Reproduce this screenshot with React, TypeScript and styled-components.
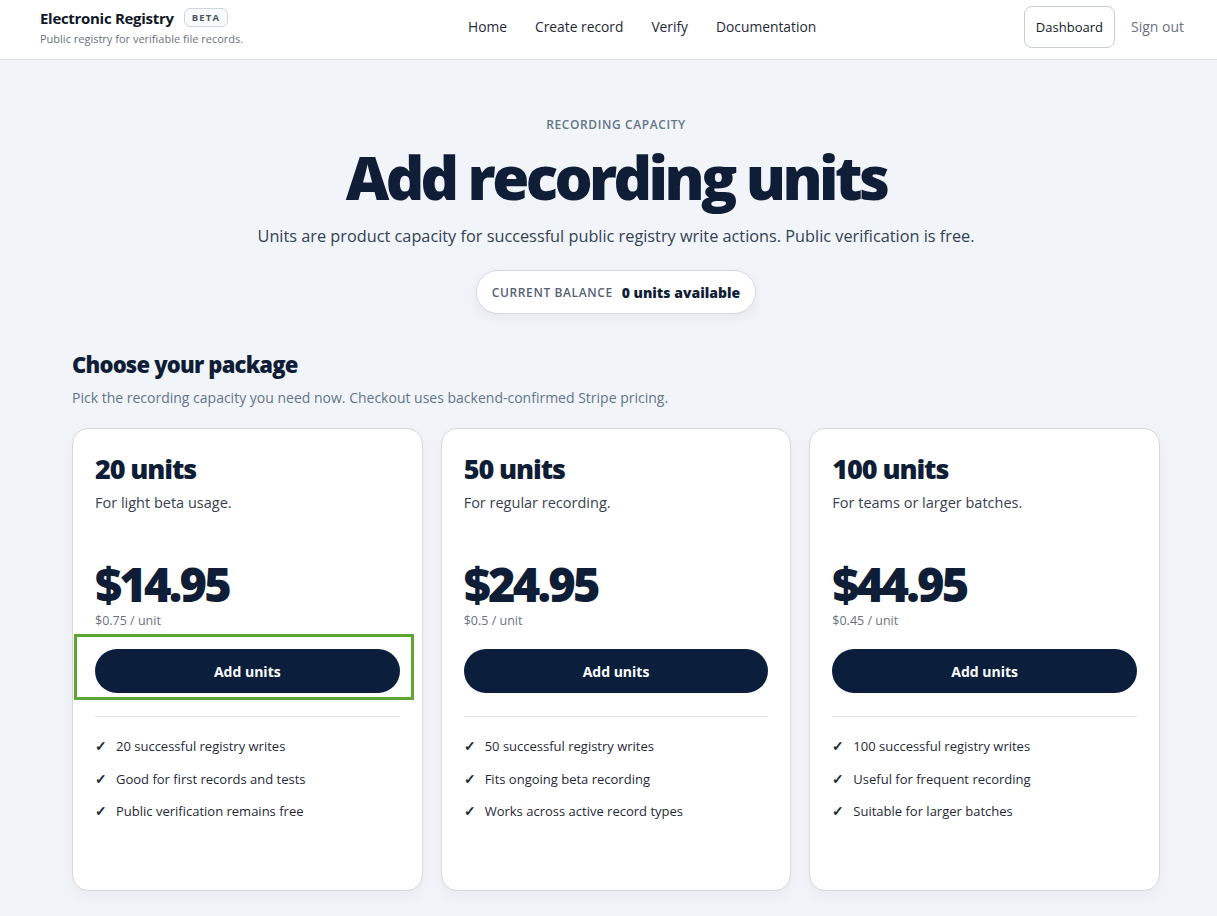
import React from "react";
import styled, { createGlobalStyle } from "styled-components";

const GlobalStyle = createGlobalStyle`
  * { box-sizing: border-box; }
  body {
    margin: 0;
    background: #f1f4f8;
    font-family: "Open Sans", "Noto Sans", "Liberation Sans", sans-serif;
    color: #0f1e36;
  }
`;

const Header = styled.header`
  height: 60px;
  background: #ffffff;
  border-bottom: 1px solid #d9dde3;
  display: grid;
  grid-template-columns: 428px auto 1fr;
  align-items: center;
  padding: 0 33px 6px 40px;
`;

const Brand = styled.div`
  display: flex;
  flex-direction: column;
  gap: 3px;
`;

const BrandRow = styled.div`
  display: flex;
  align-items: center;
  gap: 10px;
`;

const BrandName = styled.span`
  font-size: 15px;
  font-weight: 700;
  color: #111827;
  letter-spacing: -0.3px;
`;

const Badge = styled.span`
  font-size: 9.5px;
  font-weight: 700;
  letter-spacing: 1.2px;
  color: #4b5563;
  border: 1px solid #d1d5db;
  border-radius: 6px;
  padding: 2px 7px;
  background: #f9fafb;
`;

const Tagline = styled.span`
  font-size: 11px;
  color: #6b7280;
`;

const Nav = styled.nav`
  display: flex;
  gap: 28px;
`;

const NavLink = styled.a`
  font-size: 13.8px;
  font-weight: 500;
  color: #1f2937;
  text-decoration: none;
`;

const Actions = styled.div`
  display: flex;
  justify-content: flex-end;
  align-items: center;
  gap: 16px;
`;

const DashButton = styled.button`
  height: 42px;
  padding: 0 11px;
  background: #fff;
  border: 1px solid #c6ccd4;
  border-radius: 8px;
  font: inherit;
  font-size: 13px;
  font-weight: 500;
  color: #111827;
`;

const SignOut = styled.a`
  font-size: 14px;
  color: #6b7280;
`;

const Main = styled.main`
  width: 1088px;
  margin: 0 0 0 72px;
  padding: 56px 0 24px;
`;

const Hero = styled.section`
  display: flex;
  flex-direction: column;
  align-items: center;
  text-align: center;
`;

const Eyebrow = styled.div`
  font-size: 12px;
  font-weight: 600;
  letter-spacing: 0.6px;
  color: #64748b;
`;

const Title = styled.h1`
  margin: 6px 0 0;
  font-size: 60px;
  line-height: 76px;
  font-weight: 800;
  letter-spacing: -3.6px;
  color: #0f1e36;
`;

const Lead = styled.p`
  margin: 10px 0 0;
  font-size: 16.3px;
  color: #334155;
`;

const Balance = styled.div`
  margin-top: 23px;
  height: 44px;
  display: flex;
  align-items: center;
  gap: 9px;
  padding: 0 15px;
  background: #fff;
  border: 1px solid #d6dbe2;
  border-radius: 999px;
  box-shadow: 0 4px 14px rgba(15, 30, 54, 0.06);
`;

const BalanceLabel = styled.span`
  font-size: 12px;
  font-weight: 600;
  letter-spacing: 0.6px;
  color: #556274;
`;

const BalanceValue = styled.span`
  font-size: 14px;
  font-weight: 800;
  color: #0f1e36;
`;

const SectionTitle = styled.h2`
  margin: 35px 0 0;
  font-size: 22px;
  font-weight: 800;
  letter-spacing: -0.8px;
  color: #0f1e36;
`;

const SectionLead = styled.p`
  margin: 9px 0 0;
  font-size: 14px;
  color: #64748b;
`;

const Grid = styled.div`
  margin-top: 21px;
  display: grid;
  grid-template-columns: repeat(3, 1fr);
  gap: 18px;
`;

const Card = styled.div`
  position: relative;
  height: 463px;
  background: #fff;
  border: 1px solid #d3d8df;
  border-radius: 16px;
  padding: 22px 22px;
  display: flex;
  flex-direction: column;
  box-shadow: 0 6px 18px rgba(15, 30, 54, 0.04);
`;

const CardTitle = styled.h3`
  margin: 0;
  font-size: 27px;
  line-height: 36px;
  font-weight: 800;
  letter-spacing: -1.1px;
  color: #0f1e36;
`;

const CardDesc = styled.p`
  margin: 6px 0 0;
  font-size: 14.5px;
  color: #374151;
  min-height: 55px;
`;

const Price = styled.div`
  margin-top: 11px;
  font-size: 47px;
  line-height: 50px;
  font-weight: 800;
  letter-spacing: -2.8px;
  color: #0f1e36;
`;

const PerUnit = styled.div`
  margin-top: 3px;
  font-size: 12.5px;
  color: #6b7280;
`;

const AddButton = styled.button`
  margin-top: 20px;
  height: 44px;
  border: none;
  border-radius: 999px;
  background: #0b1f3d;
  color: #fff;
  font: inherit;
  font-size: 14px;
  font-weight: 700;
`;

const Highlight = styled.div`
  position: absolute;
  left: 1px;
  top: 205px;
  width: 340px;
  height: 66px;
  border: 3px solid #5ea531;
  pointer-events: none;
`;

const Divider = styled.hr`
  margin: 23px 0 0;
  border: none;
  border-top: 1px solid #dfe3e8;
`;

const Features = styled.ul`
  list-style: none;
  margin: 19px 0 0;
  padding: 0;
  display: flex;
  flex-direction: column;
  gap: 12.5px;
`;

const Feature = styled.li`
  display: flex;
  gap: 11px;
  font-size: 13px;
  line-height: 20px;
  color: #1f2937;
`;

const Check = styled.span`
  width: 10px;
  font-size: 14px;
  font-weight: 700;
  color: #1f2937;
`;

const packages = [
  {
    units: 20,
    desc: "For light beta usage.",
    price: "$14.95",
    per: "$0.75 / unit",
    features: ["20 successful registry writes", "Good for first records and tests", "Public verification remains free"],
  },
  {
    units: 50,
    desc: "For regular recording.",
    price: "$24.95",
    per: "$0.5 / unit",
    features: ["50 successful registry writes", "Fits ongoing beta recording", "Works across active record types"],
  },
  {
    units: 100,
    desc: "For teams or larger batches.",
    price: "$44.95",
    per: "$0.45 / unit",
    features: ["100 successful registry writes", "Useful for frequent recording", "Suitable for larger batches"],
  },
];

export default function App() {
  return (
    <>
      <GlobalStyle />
      <Header>
        <Brand>
          <BrandRow>
            <BrandName>Electronic Registry</BrandName>
            <Badge>BETA</Badge>
          </BrandRow>
          <Tagline>Public registry for verifiable file records.</Tagline>
        </Brand>
        <Nav>
          <NavLink href="#">Home</NavLink>
          <NavLink href="#">Create record</NavLink>
          <NavLink href="#">Verify</NavLink>
          <NavLink href="#">Documentation</NavLink>
        </Nav>
        <Actions>
          <DashButton>Dashboard</DashButton>
          <SignOut>Sign out</SignOut>
        </Actions>
      </Header>
      <Main>
        <Hero>
          <Eyebrow>RECORDING CAPACITY</Eyebrow>
          <Title>Add recording units</Title>
          <Lead>Units are product capacity for successful public registry write actions. Public verification is free.</Lead>
          <Balance>
            <BalanceLabel>CURRENT BALANCE</BalanceLabel>
            <BalanceValue>0 units available</BalanceValue>
          </Balance>
        </Hero>
        <SectionTitle>Choose your package</SectionTitle>
        <SectionLead>Pick the recording capacity you need now. Checkout uses backend-confirmed Stripe pricing.</SectionLead>
        <Grid>
          {packages.map((p, i) => (
            <Card key={p.units}>
              <CardTitle>{p.units} units</CardTitle>
              <CardDesc>{p.desc}</CardDesc>
              <Price>{p.price}</Price>
              <PerUnit>{p.per}</PerUnit>
              <AddButton>Add units</AddButton>
              {i === 0 && <Highlight />}
              <Divider />
              <Features>
                {p.features.map((f) => (
                  <Feature key={f}>
                    <Check>✓</Check>
                    {f}
                  </Feature>
                ))}
              </Features>
            </Card>
          ))}
        </Grid>
      </Main>
    </>
  );
}
